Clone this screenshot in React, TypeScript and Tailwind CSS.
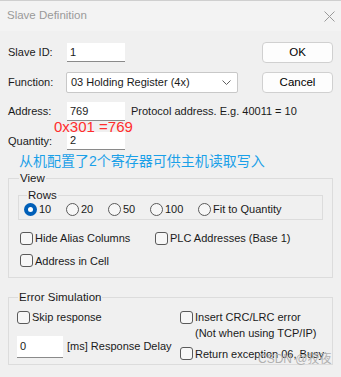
import React from 'react';

const font = { fontFamily: '"Liberation Sans", Arial, sans-serif' };
const cjk = { fontFamily: '"Liberation Sans", "Noto Sans CJK SC", sans-serif' };

const Radio = ({ checked, label }: { checked?: boolean; label: string }) => (
  <label className="flex items-center gap-[2px]">
    {checked ? (
      <span className="w-[13px] h-[13px] rounded-full bg-[#005fb8] flex items-center justify-center">
        <span className="w-[5px] h-[5px] rounded-full bg-white" />
      </span>
    ) : (
      <span className="w-[13px] h-[13px] rounded-full border border-[#5a5a5a] bg-[#f7f7f7]" />
    )}
    <span>{label}</span>
  </label>
);

const Check = ({ label, className = '' }: { label: string; className?: string }) => (
  <label className={`flex items-center gap-[2px] ${className}`}>
    <span className="w-[13px] h-[13px] rounded-[3px] border border-[#5a5a5a] bg-[#f7f7f7] shrink-0" />
    <span>{label}</span>
  </label>
);

const TextBox = ({ value, className = '' }: { value: string; className?: string }) => (
  <div className={`bg-white border-b border-[#8a8a8a] px-[3px] flex items-center ${className}`}>{value}</div>
);

const Button = ({ label }: { label: string }) => (
  <button className="w-[71px] h-[21px] bg-[#fdfdfd] border border-[#d0d0d0] rounded-[4px] text-[11.5px] text-black">
    {label}
  </button>
);

export default function App() {
  return (
    <div className="w-[341px] h-[377px] bg-[#f0f0f0] text-[11px] text-[#1a1a1a] overflow-hidden border-t border-[#cfcfcf]" style={font}>
      {/* title bar */}
      <div className="h-[30px] flex items-center justify-between pl-[7px] pr-[3px] bg-[#f3f3f3]">
        <span className="text-[#9a9a9a] text-[11.5px]">Slave Definition</span>
        <svg width="11" height="11" viewBox="0 0 11 11" className="mr-[3px]">
          <path d="M0.5 0.5 L10.5 10.5 M10.5 0.5 L0.5 10.5" stroke="#9a9a9a" strokeWidth="1" />
        </svg>
      </div>

      <div className="relative px-[8px] pt-[11px]">
        <div className="flex items-center h-[21px]">
          <span className="w-[59px]">Slave ID:</span>
          <TextBox value="1" className="w-[58px] h-[19px]" />
          <div className="ml-auto"><Button label="OK" /></div>
        </div>

        <div className="flex items-center h-[21px] mt-[9px]">
          <span className="w-[58px]">Function:</span>
          <div className="w-[172px] h-[21px] bg-white border border-[#c8c8c8] rounded-[2px] flex items-center justify-between pl-[4px] pr-[6px]">
            <span>03 Holding Register (4x)</span>
            <svg width="9" height="6" viewBox="0 0 9 6">
              <path d="M0.5 0.5 L4.5 4.5 L8.5 0.5" fill="none" stroke="#606060" strokeWidth="1" />
            </svg>
          </div>
          <div className="ml-auto"><Button label="Cancel" /></div>
        </div>

        <div className="flex items-center h-[19px] mt-[9px]">
          <span className="w-[59px]">Address:</span>
          <TextBox value="769" className="w-[58px] h-[19px]" />
          <span className="ml-[6px]">Protocol address. E.g. 40011 = 10</span>
        </div>

        <div className="absolute left-[54px] top-[88px] text-[#ff2d2d] text-[15px] leading-[15px]">0x301 =769</div>

        <div className="flex items-center h-[18px] mt-[11px]">
          <span className="w-[59px]">Quantity:</span>
          <TextBox value="2" className="w-[58px] h-[18px]" />
        </div>

        <div className="ml-[11px] mt-[2px] text-[#1aa0e8] text-[14px] leading-[18px]" style={cjk}>
          从机配置了2个寄存器可供主机读取写入
        </div>

        <fieldset className="border border-[#dcdcdc] mt-[1px] h-[107px] px-[9px] pb-[8px]">
          <legend className="ml-[1px] px-[1px] text-[11.5px] leading-[14px]">View</legend>
          <fieldset className="border border-[#dcdcdc] h-[32px] px-[5px] mt-[3px]">
            <legend className="ml-[3px] px-[1px] text-[11.5px] leading-[14px]">Rows</legend>
            <div className="flex items-center -mt-[1px]">
              <div className="w-[42px]"><Radio checked label="10" /></div>
              <div className="w-[42px]"><Radio label="20" /></div>
              <div className="w-[42px]"><Radio label="50" /></div>
              <div className="w-[48px]"><Radio label="100" /></div>
              <Radio label="Fit to Quantity" />
            </div>
          </fieldset>
          <div className="flex items-center mt-[10px] ml-[2px]">
            <Check label="Hide Alias Columns" className="w-[135px]" />
            <Check label="PLC Addresses (Base 1)" />
          </div>
          <Check label="Address in Cell" className="mt-[6px] ml-[2px]" />
        </fieldset>

        <fieldset className="border border-[#dcdcdc] mt-[12px] h-[75px] px-[8px]">
          <legend className="ml-[1px] px-[1px] text-[11.5px] leading-[14px]">Error Simulation</legend>
          <div className="flex">
            <div className="w-[163px]">
              <Check label="Skip response" className="mt-[5px]" />
              <div className="flex items-center mt-[10px]">
                <TextBox value="0" className="w-[46px] h-[22px]" />
                <span className="ml-[4px]">[ms] Response Delay</span>
              </div>
            </div>
            <div className="mt-[5px]">
              <Check label="Insert CRC/LRC error" />
              <div className="pl-[15px] leading-[14px]">(Not when using TCP/IP)</div>
              <Check label="Return exception 06, Busy" className="mt-[6px]" />
            </div>
          </div>
        </fieldset>

        <div className="absolute left-[258px] top-[319px] text-[#b0b0b0] text-[12px]" style={cjk}>
          CSDN @狡夜
        </div>
      </div>
    </div>
  );
}
